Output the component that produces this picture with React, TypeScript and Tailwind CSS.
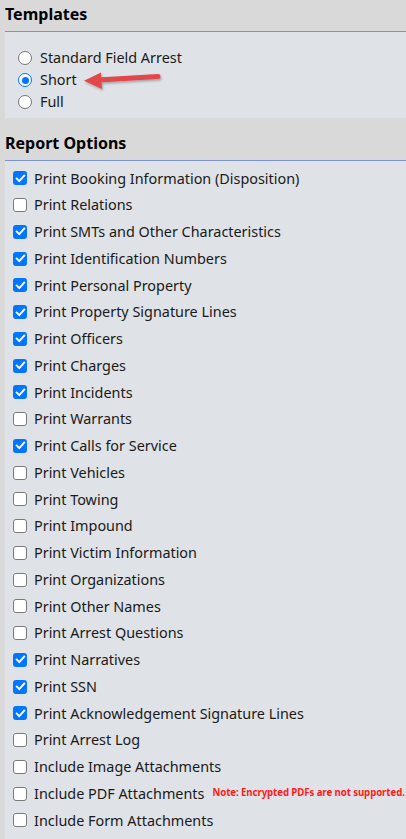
import { useState } from "react";

type Option = {
  label: string;
  checked: boolean;
  note?: string;
};

const initialOptions: Option[] = [
  { label: "Print Booking Information (Disposition)", checked: true },
  { label: "Print Relations", checked: false },
  { label: "Print SMTs and Other Characteristics", checked: true },
  { label: "Print Identification Numbers", checked: true },
  { label: "Print Personal Property", checked: true },
  { label: "Print Property Signature Lines", checked: true },
  { label: "Print Officers", checked: true },
  { label: "Print Charges", checked: true },
  { label: "Print Incidents", checked: true },
  { label: "Print Warrants", checked: false },
  { label: "Print Calls for Service", checked: true },
  { label: "Print Vehicles", checked: false },
  { label: "Print Towing", checked: false },
  { label: "Print Impound", checked: false },
  { label: "Print Victim Information", checked: false },
  { label: "Print Organizations", checked: false },
  { label: "Print Other Names", checked: false },
  { label: "Print Arrest Questions", checked: false },
  { label: "Print Narratives", checked: true },
  { label: "Print SSN", checked: true },
  { label: "Print Acknowledgement Signature Lines", checked: true },
  { label: "Print Arrest Log", checked: false },
  { label: "Include Image Attachments", checked: false },
  {
    label: "Include PDF Attachments",
    checked: false,
    note: "Note: Encrypted PDFs are not supported.",
  },
  { label: "Include Form Attachments", checked: false },
];

const templates = ["Standard Field Arrest", "Short", "Full"];

function Arrow() {
  return (
    <svg
      className="absolute left-[77px] top-[1px] overflow-visible"
      width="80"
      height="21"
      viewBox="0 0 80 21"
    >
      <defs>
        <filter id="sh" x="-20%" y="-50%" width="140%" height="200%">
          <feDropShadow dx="1" dy="1.5" stdDeviation="1.2" floodOpacity="0.3" />
        </filter>
      </defs>
      <g filter="url(#sh)">
        <path
          d="M76 6.5 L16 10"
          stroke="#e2474b"
          strokeWidth="5"
          strokeLinecap="round"
          fill="none"
        />
        <path d="M2 10.8 L19 2.5 L20 19 Z" fill="#e2474b" strokeLinejoin="round" />
      </g>
    </svg>
  );
}

function Radio({ checked }: { checked: boolean }) {
  return checked ? (
    <span className="flex h-[14px] w-[14px] items-center justify-center rounded-full border-[1.5px] border-[#0075ff] bg-white">
      <span className="h-[7px] w-[7px] rounded-full bg-[#0075ff]" />
    </span>
  ) : (
    <span className="h-[14px] w-[14px] rounded-full border border-[#767676] bg-white" />
  );
}

function Checkbox({ checked }: { checked: boolean }) {
  return checked ? (
    <span className="flex h-[14px] w-[14px] items-center justify-center rounded-[3px] bg-[#0075ff]">
      <svg width="11" height="11" viewBox="0 0 11 11">
        <path
          d="M1.8 5.6 L4.3 8.1 L9.2 2.6"
          stroke="white"
          strokeWidth="2"
          fill="none"
          strokeLinecap="square"
        />
      </svg>
    </span>
  ) : (
    <span className="h-[14px] w-[14px] rounded-[3px] border border-[#7a7a7a] bg-white" />
  );
}

export default function App() {
  const [template, setTemplate] = useState("Short");
  const [options, setOptions] = useState<Option[]>(initialOptions);

  function toggle(index: number) {
    setOptions((prev) =>
      prev.map((o, i) => (i === index ? { ...o, checked: !o.checked } : o))
    );
  }

  return (
    <div
      className="w-[406px] min-h-[839px] bg-[#d9d9d9] text-[#1a1a1a]"
      style={{ fontFamily: '"Noto Sans", "Open Sans", sans-serif' }}
    >
      <h2 className="h-[31px] pl-[5px] pt-[3px] text-[16px] font-bold text-black leading-[22px]">
        Templates
      </h2>
      <div className="ml-[5px] border-t border-[#7b93cf] bg-[#dfe2e6] pt-[15px] pb-[5px]">
        {templates.map((t) => (
          <div
            key={t}
            onClick={() => setTemplate(t)}
            className="relative flex h-[22px] cursor-pointer items-center pl-[13px] text-[14.4px]"
          >
            <Radio checked={template === t} />
            <span className="ml-[8px]">{t}</span>
            {t === "Short" && <Arrow />}
          </div>
        ))}
      </div>

      <h2 className="mt-[11px] h-[31px] pl-[5px] pt-[3px] text-[16px] font-bold text-black leading-[22px]">
        Report Options
      </h2>
      <div className="ml-[5px] border-t border-[#7b93cf] bg-[#dfe2e6] pt-[4px] pb-[5px]">
        {options.map((o, i) => (
          <div
            key={o.label}
            onClick={() => toggle(i)}
            className="flex h-[26.75px] cursor-pointer items-center pl-[8px] text-[14.4px]"
          >
            <Checkbox checked={o.checked} />
            <span className="ml-[7px] whitespace-nowrap">{o.label}</span>
            {o.note && (
              <span className="ml-[8px] whitespace-nowrap text-[9.7px] font-bold tracking-[-0.1px] text-[#ff1a1a]">
                {o.note}
              </span>
            )}
          </div>
        ))}
      </div>
    </div>
  );
}
